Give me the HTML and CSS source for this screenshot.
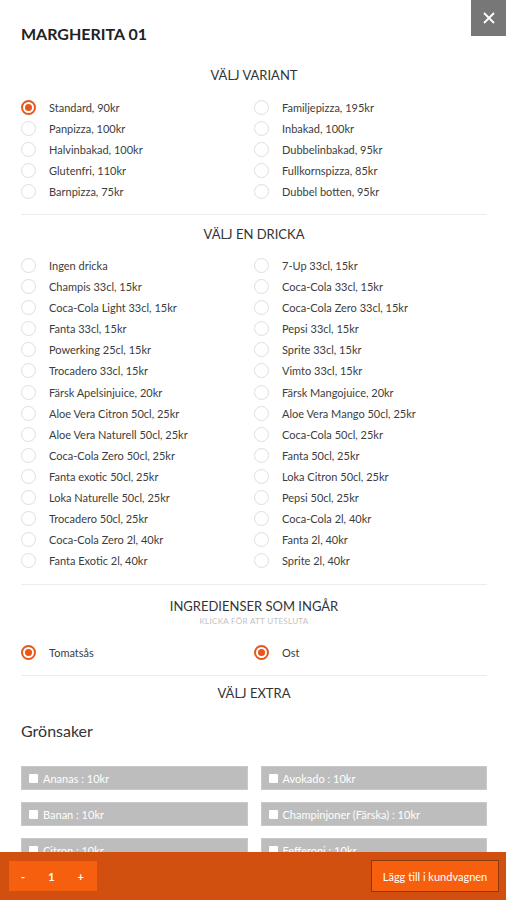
FILE: index.html
```html
<!DOCTYPE html>
<html lang="sv">
<head>
<meta charset="utf-8">
<title>Margherita 01</title>
<link rel="stylesheet" href="styles.css">
</head>
<body>
<div class="modal">
  <button class="close" aria-label="Stäng">
    <svg width="12" height="12" viewBox="0 0 12 12"><path d="M1 1L11 11M11 1L1 11" stroke="#fff" stroke-width="1.8" fill="none"/></svg>
  </button>
  <h1 class="title">MARGHERITA 01</h1>

  <section class="section first">
    <h2 class="heading">VÄLJ VARIANT</h2>
    <div class="options">
      <div class="opt"><span class="radio checked"></span>Standard, 90kr</div>
      <div class="opt"><span class="radio"></span>Familjepizza, 195kr</div>
      <div class="opt"><span class="radio"></span>Panpizza, 100kr</div>
      <div class="opt"><span class="radio"></span>Inbakad, 100kr</div>
      <div class="opt"><span class="radio"></span>Halvinbakad, 100kr</div>
      <div class="opt"><span class="radio"></span>Dubbelinbakad, 95kr</div>
      <div class="opt"><span class="radio"></span>Glutenfri, 110kr</div>
      <div class="opt"><span class="radio"></span>Fullkornspizza, 85kr</div>
      <div class="opt"><span class="radio"></span>Barnpizza, 75kr</div>
      <div class="opt"><span class="radio"></span>Dubbel botten, 95kr</div>
    </div>
  </section>

  <section class="section">
    <h2 class="heading">VÄLJ EN DRICKA</h2>
    <div class="options">
      <div class="opt"><span class="radio"></span>Ingen dricka</div>
      <div class="opt"><span class="radio"></span>7-Up 33cl, 15kr</div>
      <div class="opt"><span class="radio"></span>Champis 33cl, 15kr</div>
      <div class="opt"><span class="radio"></span>Coca-Cola 33cl, 15kr</div>
      <div class="opt"><span class="radio"></span>Coca-Cola Light 33cl, 15kr</div>
      <div class="opt"><span class="radio"></span>Coca-Cola Zero 33cl, 15kr</div>
      <div class="opt"><span class="radio"></span>Fanta 33cl, 15kr</div>
      <div class="opt"><span class="radio"></span>Pepsi 33cl, 15kr</div>
      <div class="opt"><span class="radio"></span>Powerking 25cl, 15kr</div>
      <div class="opt"><span class="radio"></span>Sprite 33cl, 15kr</div>
      <div class="opt"><span class="radio"></span>Trocadero 33cl, 15kr</div>
      <div class="opt"><span class="radio"></span>Vimto 33cl, 15kr</div>
      <div class="opt"><span class="radio"></span>Färsk Apelsinjuice, 20kr</div>
      <div class="opt"><span class="radio"></span>Färsk Mangojuice, 20kr</div>
      <div class="opt"><span class="radio"></span>Aloe Vera Citron 50cl, 25kr</div>
      <div class="opt"><span class="radio"></span>Aloe Vera Mango 50cl, 25kr</div>
      <div class="opt"><span class="radio"></span>Aloe Vera Naturell 50cl, 25kr</div>
      <div class="opt"><span class="radio"></span>Coca-Cola 50cl, 25kr</div>
      <div class="opt"><span class="radio"></span>Coca-Cola Zero 50cl, 25kr</div>
      <div class="opt"><span class="radio"></span>Fanta 50cl, 25kr</div>
      <div class="opt"><span class="radio"></span>Fanta exotic 50cl, 25kr</div>
      <div class="opt"><span class="radio"></span>Loka Citron 50cl, 25kr</div>
      <div class="opt"><span class="radio"></span>Loka Naturelle 50cl, 25kr</div>
      <div class="opt"><span class="radio"></span>Pepsi 50cl, 25kr</div>
      <div class="opt"><span class="radio"></span>Trocadero 50cl, 25kr</div>
      <div class="opt"><span class="radio"></span>Coca-Cola 2l, 40kr</div>
      <div class="opt"><span class="radio"></span>Coca-Cola Zero 2l, 40kr</div>
      <div class="opt"><span class="radio"></span>Fanta 2l, 40kr</div>
      <div class="opt"><span class="radio"></span>Fanta Exotic 2l, 40kr</div>
      <div class="opt"><span class="radio"></span>Sprite 2l, 40kr</div>
    </div>
  </section>

  <section class="section ingr">
    <h2 class="heading">INGREDIENSER SOM INGÅR</h2>
    <p class="sub">KLICKA FÖR ATT UTESLUTA</p>
    <div class="options">
      <div class="opt"><span class="radio checked"></span>Tomatsås</div>
      <div class="opt"><span class="radio checked"></span>Ost</div>
    </div>
  </section>

  <section class="section extra">
    <h2 class="heading">VÄLJ EXTRA</h2>
    <h3 class="group">Grönsaker</h3>
    <div class="extras">
      <label class="ex"><span class="box"></span>Ananas : 10kr</label>
      <label class="ex"><span class="box"></span>Avokado : 10kr</label>
      <label class="ex"><span class="box"></span>Banan : 10kr</label>
      <label class="ex"><span class="box"></span>Champinjoner (Färska) : 10kr</label>
      <label class="ex"><span class="box"></span>Citron : 10kr</label>
      <label class="ex"><span class="box"></span>Fefferoni : 10kr</label>
      <label class="ex"><span class="box"></span>Jalapeños : 10kr</label>
      <label class="ex"><span class="box"></span>Lök : 10kr</label>
    </div>
  </section>
</div>

<div class="bar">
  <div class="qty"><span>-</span><span>1</span><span>+</span></div>
  <button class="add">Lägg till i kundvagnen</button>
</div>
</body>
</html>
```

FILE: styles.css
```css
* { box-sizing: border-box; }
html, body { margin: 0; padding: 0; background: #fff; }
body {
  font-family: Lato, "Open Sans", Arial, sans-serif;
  color: #3a3a3a;
}
.modal {
  padding: 0 19px 120px 21px;
}
.close {
  position: absolute;
  top: 0;
  right: 0;
  width: 35px;
  height: 36px;
  border: 0;
  background: #777;
  display: flex;
  align-items: center;
  justify-content: center;
  padding: 0;
}
.title {
  margin: 0;
  padding-top: 24px;
  font-size: 16px;
  line-height: 20px;
  font-weight: 700;
  color: #222;
}
.section {
  padding: 9px 0 13px;
  border-bottom: 1px solid #ececec;
}
.section.first { padding-top: 21px; padding-bottom: 12px; }
.first .heading { margin-bottom: 12px; }
.heading {
  margin: 0 0 10.5px;
  text-align: center;
  font-size: 13px;
  line-height: 20px;
  font-weight: 400;
  color: #333;
}
.options {
  display: grid;
  grid-template-columns: 1fr 1fr;
}
.opt {
  height: 21.1px;
  display: flex;
  align-items: center;
  font-size: 11px;
  color: #3d3d3d;
}
.radio {
  width: 15px;
  height: 15px;
  border: 1px solid #dedede;
  border-radius: 50%;
  margin-right: 13px;
  flex: none;
  display: flex;
  align-items: center;
  justify-content: center;
}
.radio.checked {
  border: 2px solid #e8561c;
}
.radio.checked::after {
  content: "";
  width: 7px;
  height: 7px;
  border-radius: 50%;
  background: #e8561c;
}
.ingr { padding-top: 11px; padding-bottom: 12px; }
.ingr .heading { margin-bottom: 0; }
.sub {
  margin: 0 0 16px;
  text-align: center;
  font-size: 8px;
  line-height: 10px;
  letter-spacing: 0.3px;
  color: #c2c2c2;
}
.extra { padding-top: 7px; border-bottom: 0; }
.extra .heading { margin-bottom: 18px; }
.group {
  margin: 0 0 25px;
  font-size: 16px;
  line-height: 20px;
  font-weight: 400;
  color: #333;
}
.extras {
  display: grid;
  grid-template-columns: 1fr 1fr;
  column-gap: 13px;
  row-gap: 12px;
}
.ex {
  height: 24px;
  background: #bdbdbd;
  border: 1px solid #c9c9c9;
  display: flex;
  align-items: center;
  padding-left: 7px;
  font-size: 11px;
  color: #fff;
}
.box {
  width: 9px;
  height: 9px;
  background: #fff;
  border-radius: 1px;
  margin-right: 5px;
  flex: none;
}
.bar {
  position: fixed;
  left: 0;
  right: 0;
  bottom: 0;
  height: 48px;
  background: #d2500f;
  display: flex;
  align-items: center;
  justify-content: space-between;
  padding: 0 7px 0 9px;
}
.qty {
  width: 88px;
  height: 30px;
  background: #f55f0e;
  display: flex;
  align-items: center;
  justify-content: space-between;
  padding: 0 13px 0 12px;
  color: #fff;
  font-size: 11px;
  font-weight: 700;
}
.add {
  width: 128px;
  height: 32px;
  background: #f55f0e;
  border: 1px solid #8b3a10;
  color: #fff;
  font-family: Lato, Arial, sans-serif;
  font-size: 11px;
  padding: 0;
}
```
